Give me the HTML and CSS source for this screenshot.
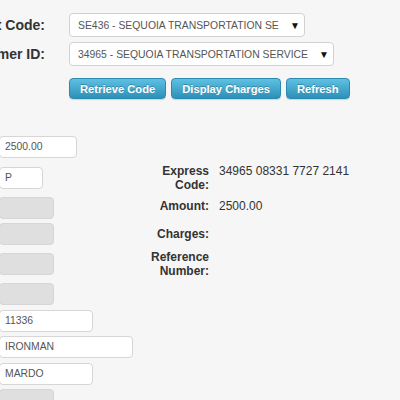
FILE: index.html
```html
<!DOCTYPE html>
<html>
<head>
<meta charset="utf-8">
<link rel="stylesheet" href="styles.css">
</head>
<body>
<div class="page">
  <div class="top">
    <label class="lbl">Agent Code:</label>
    <div class="select s1"><span class="sel-text">SE436 - SEQUOIA TRANSPORTATION SE</span><span class="caret">&#9660;</span></div>
    <label class="lbl">Customer ID:</label>
    <div class="select s2"><span class="sel-text">34965 - SEQUOIA TRANSPORTATION SERVICE</span><span class="caret">&#9660;</span></div>
    <div class="spacer"></div>
    <div class="buttons">
      <button class="btn">Retrieve Code</button>
      <button class="btn">Display Charges</button>
      <button class="btn">Refresh</button>
    </div>
  </div>
  <div class="bottom">
    <div class="fields">
      <div class="input w78">2500.00</div>
      <div class="input w44 m9">P</div>
      <div class="input dis w55 m8"></div>
      <div class="input dis w55 m4"></div>
      <div class="input dis w55 m8"></div>
      <div class="input dis w55 m8"></div>
      <div class="input w94 m5">11336</div>
      <div class="input w134 m4">IRONMAN</div>
      <div class="input w94 m5">MARDO</div>
      <div class="input dis w55 m4"></div>
    </div>
    <div class="details">
      <div class="drow">
        <div class="dlabel">Express Code:</div>
        <div class="dval">34965 08331 7727 2141</div>
      </div>
      <div class="drow r2">
        <div class="dlabel">Amount:</div>
        <div class="dval">2500.00</div>
      </div>
      <div class="drow r3">
        <div class="dlabel">Charges:</div>
        <div class="dval"></div>
      </div>
      <div class="drow r4">
        <div class="dlabel">Reference Number:</div>
        <div class="dval"></div>
      </div>
    </div>
  </div>
</div>
</body>
</html>
```
FILE: styles.css
```css
* { box-sizing: border-box; }
html, body { margin: 0; padding: 0; }
body {
  background: #f6f6f6;
  font-family: "Liberation Sans", Arial, sans-serif;
  color: #333;
  width: 400px;
  height: 400px;
  overflow: hidden;
}
.page { padding-top: 13px; }
.top {
  display: grid;
  grid-template-columns: 111px auto;
  column-gap: 24px;
  row-gap: 5px;
  margin-left: -66px;
  align-items: center;
  justify-items: start;
}
.lbl {
  font-size: 14px;
  font-weight: bold;
  color: #333;
  text-align: right;
  justify-self: end;
  white-space: nowrap;
}
.select {
  display: flex;
  align-items: center;
  height: 24px;
  background: #fff;
  border: 1px solid #d2d2d2;
  border-radius: 4px;
  padding: 0 4px 0 8px;
  font-size: 10.4px;
  color: #555;
}
.s1 { width: 236px; }
.s2 { width: 265px; }
.sel-text { flex: 1; white-space: nowrap; overflow: hidden; }
.caret { font-size: 10px; color: #111; width: 10px; text-align: center; }
.buttons {
  display: flex;
  gap: 5px;
  margin-top: 7px;
}
.btn {
  height: 21px;
  padding: 0 10px;
  font-family: "Liberation Sans", Arial, sans-serif;
  font-size: 11.2px;
  font-weight: bold;
  color: #fff;
  text-shadow: 0 -1px 0 rgba(0,0,0,0.25);
  border: 1px solid #2b8ab0;
  border-radius: 4px;
  background: linear-gradient(#5ec0e2, #2d90b8);
  box-shadow: 0 1px 1px rgba(0,0,0,0.15);
}
.bottom {
  display: flex;
  margin-top: 37px;
  margin-left: -1px;
}
.fields {
  width: 140px;
  display: flex;
  flex-direction: column;
  align-items: flex-start;
}
.input {
  height: 22px;
  line-height: 20px;
  background: #fff;
  border: 1px solid #d6d6d6;
  border-radius: 4px;
  padding: 0 5px;
  font-size: 10.4px;
  color: #555;
}
.input.dis { background: #dfdfdf; border-color: #d6d6d6; }
.w44 { width: 44px; }
.w55 { width: 55px; }
.w78 { width: 78px; }
.w94 { width: 94px; }
.w134 { width: 134px; }
.m4 { margin-top: 4px; }
.m5 { margin-top: 5px; }
.m8 { margin-top: 8px; }
.m9 { margin-top: 9px; }
.details {
  margin-left: 8px;
  padding-top: 28px;
}
.drow {
  display: flex;
  align-items: baseline;
  column-gap: 10px;
}
.r2 { margin-top: 7px; }
.r3 { margin-top: 14px; }
.r4 { margin-top: 9px; }
.dlabel {
  width: 62px;
  text-align: right;
  font-size: 12px;
  line-height: 14px;
  font-weight: bold;
  color: #333;
}
.dval {
  font-size: 12px;
  line-height: 14px;
  color: #333;
  white-space: nowrap;
}
```
